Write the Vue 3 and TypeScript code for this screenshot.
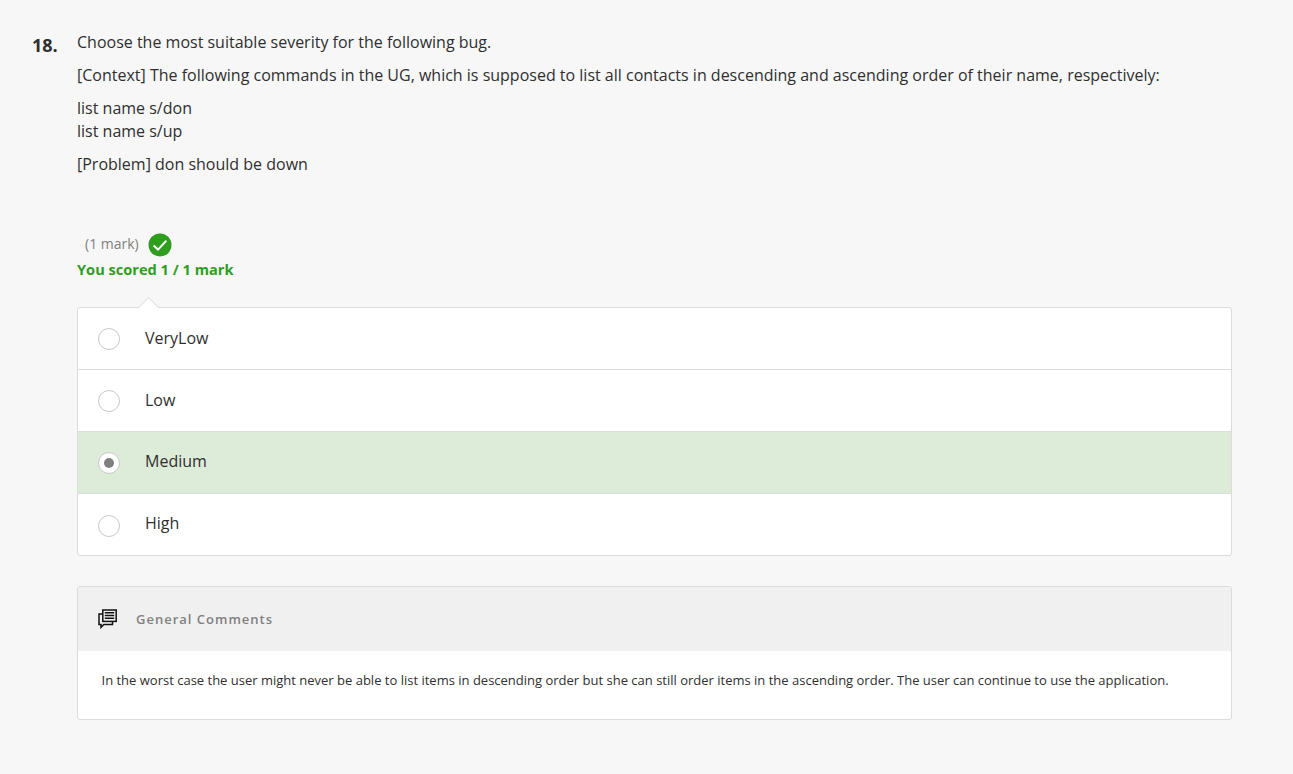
<template>
  <main class="question">
    <div class="number">18.</div>
    <div class="content">
      <div class="stem">
        <p>Choose the most suitable severity for the following bug.</p>
        <p>[Context] The following commands in the UG, which is supposed to list all contacts in descending and ascending order of their name, respectively:</p>
        <p>list name s/don<br />list name s/up</p>
        <p>[Problem] don should be down</p>
      </div>

      <div class="mark-row">
        <span class="mark">(1 mark)</span>
        <svg class="tick" viewBox="0 0 24 24" width="24" height="24">
          <circle cx="12" cy="12" r="11.5" fill="#2f9e1f" />
          <path d="M5.6 12.6 10 16.6 18.4 7.6" fill="none" stroke="#fff" stroke-width="2" />
        </svg>
      </div>
      <div class="score">You scored 1 / 1 mark</div>

      <div class="answers">
        <span class="caret"></span>
        <div
          v-for="option in options"
          :key="option"
          class="answer"
          :class="{ selected: option === selected }"
        >
          <span class="radio"><span v-if="option === selected" class="dot"></span></span>
          <span class="label">{{ option }}</span>
        </div>
      </div>

      <section class="comments">
        <header class="comments-head">
          <svg viewBox="0 0 20 20" width="20" height="20" fill="none" stroke="#111">
            <path d="M4.5 5H1V15.5H3V18.4L5.8 15.5H14.5V12.6" stroke-width="1.5" />
            <rect x="4.8" y="1" width="13.4" height="11.4" stroke-width="1.5" />
            <path d="M6.8 3.7H16.2M6.8 6.5H16.2M6.8 9.3H16.2" stroke-width="1.6" />
          </svg>
          <h3>General Comments</h3>
        </header>
        <div class="comments-body">In the worst case the user might never be able to list items in descending order but she can still order items in the ascending order. The user can continue to use the application.</div>
      </section>
    </div>
  </main>
</template>

<script setup lang="ts">
const options = ["VeryLow", "Low", "Medium", "High"];
const selected = "Medium";
</script>

<style>
html,
body {
  margin: 0;
  background: #f7f7f7;
}
</style>

<style scoped>
.question {
  display: flex;
  box-sizing: border-box;
  min-height: 774px;
  padding: 31px 61px 54px 32px;
  background: #f7f7f7;
  color: #2f2f2f;
  font-family: "Open Sans", sans-serif;
}
.number {
  width: 45px;
  flex-shrink: 0;
  padding-top: 1px;
  font-size: 18px;
  font-weight: 700;
  line-height: 27px;
}
.content {
  flex: 1;
  min-width: 0;
}
.stem {
  font-size: 16px;
  line-height: 23px;
}
.stem p {
  margin: 0 0 10px;
}
.mark-row {
  display: flex;
  align-items: center;
  gap: 9px;
  height: 24px;
  margin-top: 57px;
  padding-left: 8px;
}
.mark {
  color: #808080;
  font-size: 14px;
  line-height: 20px;
  margin-top: -2px;
}
.score {
  margin-top: 1px;
  color: #2f9e1f;
  font-size: 14.6px;
  font-weight: 700;
  line-height: 23px;
}
.answers {
  position: relative;
  margin-top: 26px;
  border: 1px solid #dcdcdc;
  border-radius: 3px;
  background: #fff;
}
.caret {
  position: absolute;
  top: -8px;
  left: 63px;
  width: 14px;
  height: 14px;
  border-top: 1px solid #dcdcdc;
  border-left: 1px solid #dcdcdc;
  background: #fff;
  transform: rotate(45deg);
}
.answer {
  display: flex;
  align-items: center;
  gap: 25px;
  box-sizing: border-box;
  height: 62px;
  padding: 0 20px 1px;
  border-bottom: 1px solid #dcdcdc;
  font-size: 16px;
}
.answer:last-child {
  height: 61px;
  border-bottom: 0;
}
.answer:nth-of-type(n + 3) .label {
  margin-top: -2px;
}
.answer.selected {
  background: #ddecd9;
}
.radio {
  display: flex;
  align-items: center;
  justify-content: center;
  box-sizing: border-box;
  width: 22px;
  height: 22px;
  margin-top: 2px;
  border: 1px solid #c8c8c8;
  border-radius: 50%;
  background: #fff;
}
.answer:last-child .radio {
  margin-top: 4px;
}
.dot {
  width: 10px;
  height: 10px;
  border-radius: 50%;
  background: #808080;
}
.comments {
  margin-top: 30px;
  overflow: hidden;
  border: 1px solid #dcdcdc;
  border-radius: 3px;
  background: #fff;
}
.comments-head {
  display: flex;
  align-items: center;
  gap: 18px;
  height: 64px;
  padding-left: 20px;
  background: #f0f0f0;
}
.comments-head h3 {
  margin: 0;
  color: #808080;
  font-size: 13px;
  font-weight: 600;
  letter-spacing: 1px;
}
.comments-body {
  padding: 20px 23px 30px 23.5px;
  font-size: 13px;
  line-height: 18px;
}
</style>
